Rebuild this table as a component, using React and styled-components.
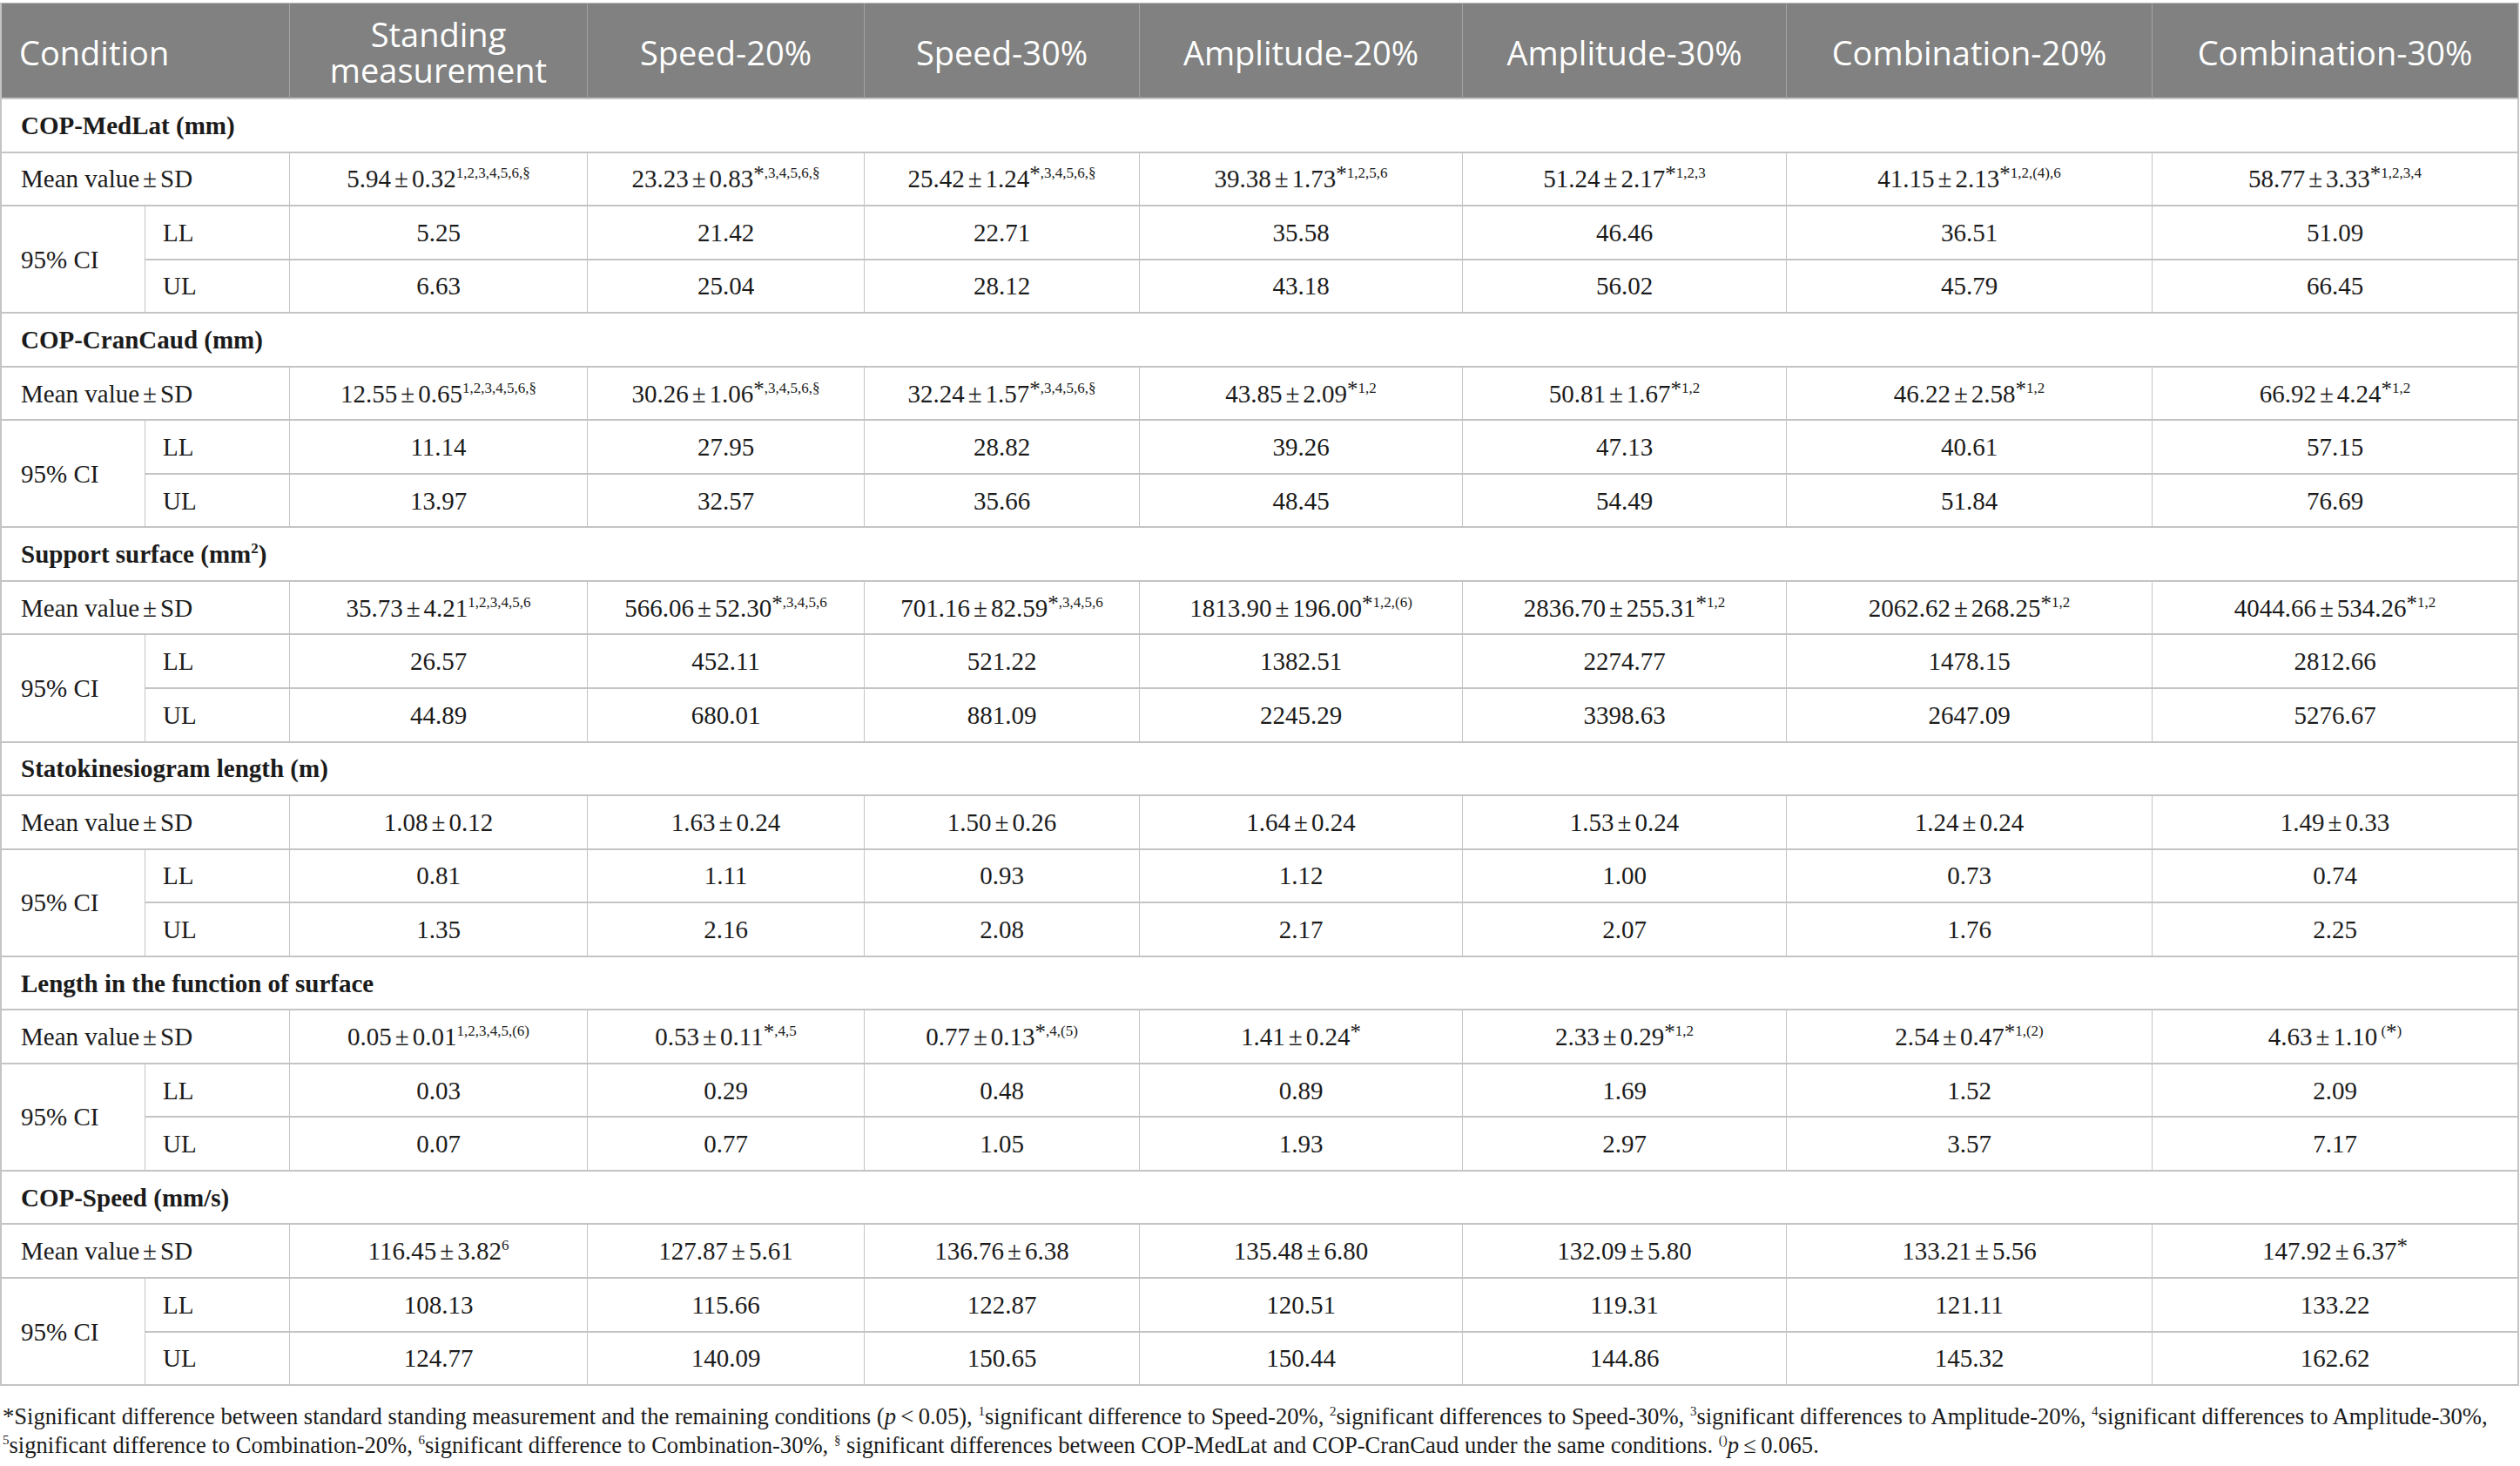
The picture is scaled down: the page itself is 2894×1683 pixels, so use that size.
import React from "react";
import styled, { createGlobalStyle } from "styled-components";

const GlobalStyle = createGlobalStyle`
  html, body {
    margin: 0;
    padding: 0;
    background: #ffffff;
  }
  body {
    font-family: "Liberation Serif", "Times New Roman", serif;
    color: #1b1b1b;
  }
`;

const line = "#c4c4c4";

const Page = styled.div`
  padding: 3px 0 0 0;
  width: 2894px;
`;

const Table = styled.div`
  display: grid;
  grid-template-columns: 165px 166px 342px 318px 316px 371px 372px 420px 420px;
  grid-template-rows: 110px;
  grid-auto-rows: 61.55px;
  width: max-content;
  border-left: 2px solid ${line};
  border-right: 1px solid ${line};
  border-top: 1px solid #bdbdbd;
`;

const HeadCell = styled.div`
  background: #808180;
  color: #ffffff;
  font-family: "Open Sans", "Liberation Sans", sans-serif;
  font-size: 38px;
  line-height: 41px;
  display: flex;
  align-items: center;
  justify-content: ${(p) => (p.$left ? "flex-start" : "center")};
  text-align: ${(p) => (p.$left ? "left" : "center")};
  padding: ${(p) => (p.$left ? "4px 0 0 20px" : "4px 0 0 0")};
  grid-column: span ${(p) => p.$span || 1};
  border-right: 1px solid #a3a3a3;
  border-bottom: 2px solid ${line};
  box-sizing: border-box;
`;

const Cell = styled.div`
  display: flex;
  align-items: center;
  box-sizing: border-box;
  border-right: 1px solid ${line};
  border-bottom: 2px solid ${line};
  font-size: 29px;
  white-space: nowrap;
`;

// inner text run, so superscripts stay inline inside the flex cell
const CellText = styled.span`
  display: block;
  line-height: 34px;
`;

const SectionCell = styled(Cell)`
  grid-column: 1 / -1;
  font-weight: 700;
  padding-left: 22px;
`;

const LabelCell = styled(Cell)`
  grid-column: span ${(p) => p.$span || 1};
  padding-left: ${(p) => (p.$sub ? "20px" : "22px")};
`;

const CiCell = styled(Cell)`
  grid-row: span 2;
  padding-left: 22px;
`;

const ValueCell = styled(Cell)`
  justify-content: center;
`;

const Pm = styled.span`
  margin: 0 4px;
`;

const Sup = styled.sup`
  font-size: 17px;
  line-height: 0;
  vertical-align: 11px;
  white-space: pre;
`;

const Star = styled.span`
  font-size: 25px;
  vertical-align: -4px;
`;

const Note = styled.p`
  margin: 19px 0 0 3px;
  font-size: 26.6px;
  line-height: 33px;
  color: #1b1b1b;
  white-space: nowrap;
`;

const NoteSup = styled.sup`
  font-size: 15px;
  line-height: 0;
  vertical-align: 10px;
`;

const columns = [
  "Speed-20%",
  "Speed-30%",
  "Amplitude-20%",
  "Amplitude-30%",
  "Combination-20%",
  "Combination-30%",
];

const sections = [
  {
    title: "COP-MedLat (mm)",
    mean: [
      ["5.94", "0.32", "1,2,3,4,5,6,§"],
      ["23.23", "0.83", "*,3,4,5,6,§"],
      ["25.42", "1.24", "*,3,4,5,6,§"],
      ["39.38", "1.73", "*1,2,5,6"],
      ["51.24", "2.17", "*1,2,3"],
      ["41.15", "2.13", "*1,2,(4),6"],
      ["58.77", "3.33", "*1,2,3,4"],
    ],
    ll: ["5.25", "21.42", "22.71", "35.58", "46.46", "36.51", "51.09"],
    ul: ["6.63", "25.04", "28.12", "43.18", "56.02", "45.79", "66.45"],
  },
  {
    title: "COP-CranCaud (mm)",
    mean: [
      ["12.55", "0.65", "1,2,3,4,5,6,§"],
      ["30.26", "1.06", "*,3,4,5,6,§"],
      ["32.24", "1.57", "*,3,4,5,6,§"],
      ["43.85", "2.09", "*1,2"],
      ["50.81", "1.67", "*1,2"],
      ["46.22", "2.58", "*1,2"],
      ["66.92", "4.24", "*1,2"],
    ],
    ll: ["11.14", "27.95", "28.82", "39.26", "47.13", "40.61", "57.15"],
    ul: ["13.97", "32.57", "35.66", "48.45", "54.49", "51.84", "76.69"],
  },
  {
    title: (
      <>
        Support surface (mm<Sup>2</Sup>)
      </>
    ),
    mean: [
      ["35.73", "4.21", "1,2,3,4,5,6"],
      ["566.06", "52.30", "*,3,4,5,6"],
      ["701.16", "82.59", "*,3,4,5,6"],
      ["1813.90", "196.00", "*1,2,(6)"],
      ["2836.70", "255.31", "*1,2"],
      ["2062.62", "268.25", "*1,2"],
      ["4044.66", "534.26", "*1,2"],
    ],
    ll: ["26.57", "452.11", "521.22", "1382.51", "2274.77", "1478.15", "2812.66"],
    ul: ["44.89", "680.01", "881.09", "2245.29", "3398.63", "2647.09", "5276.67"],
  },
  {
    title: "Statokinesiogram length (m)",
    mean: [
      ["1.08", "0.12"],
      ["1.63", "0.24"],
      ["1.50", "0.26"],
      ["1.64", "0.24"],
      ["1.53", "0.24"],
      ["1.24", "0.24"],
      ["1.49", "0.33"],
    ],
    ll: ["0.81", "1.11", "0.93", "1.12", "1.00", "0.73", "0.74"],
    ul: ["1.35", "2.16", "2.08", "2.17", "2.07", "1.76", "2.25"],
  },
  {
    title: "Length in the function of surface",
    mean: [
      ["0.05", "0.01", "1,2,3,4,5,(6)"],
      ["0.53", "0.11", "*,4,5"],
      ["0.77", "0.13", "*,4,(5)"],
      ["1.41", "0.24", "*"],
      ["2.33", "0.29", "*1,2"],
      ["2.54", "0.47", "*1,(2)"],
      ["4.63", "1.10", " (*)"],
    ],
    ll: ["0.03", "0.29", "0.48", "0.89", "1.69", "1.52", "2.09"],
    ul: ["0.07", "0.77", "1.05", "1.93", "2.97", "3.57", "7.17"],
  },
  {
    title: "COP-Speed (mm/s)",
    mean: [
      ["116.45", "3.82", "6"],
      ["127.87", "5.61"],
      ["136.76", "6.38"],
      ["135.48", "6.80"],
      ["132.09", "5.80"],
      ["133.21", "5.56"],
      ["147.92", "6.37", "*"],
    ],
    ll: ["108.13", "115.66", "122.87", "120.51", "119.31", "121.11", "133.22"],
    ul: ["124.77", "140.09", "150.65", "150.44", "144.86", "145.32", "162.62"],
  },
];

// splits the superscript so the asterisk can be drawn a bit bigger
function Marks({ text }) {
  if (!text) return null;
  const parts = text.split("*");
  return (
    <Sup>
      {parts.map((part, i) => (
        <React.Fragment key={i}>
          {i > 0 && <Star>*</Star>}
          {part}
        </React.Fragment>
      ))}
    </Sup>
  );
}

function MeanValue({ value, sd, marks }) {
  return (
    <ValueCell>
      <CellText>
        {value}
        <Pm>±</Pm>
        {sd}
        <Marks text={marks} />
      </CellText>
    </ValueCell>
  );
}

function Section({ data }) {
  return (
    <>
      <SectionCell>
        <CellText>{data.title}</CellText>
      </SectionCell>
      <LabelCell $span={2}>
        <CellText>
          Mean value<Pm>±</Pm>SD
        </CellText>
      </LabelCell>
      {data.mean.map(([v, sd, m], i) => (
        <MeanValue key={i} value={v} sd={sd} marks={m} />
      ))}
      <CiCell>
        <CellText>95% CI</CellText>
      </CiCell>
      <LabelCell $sub>
        <CellText>LL</CellText>
      </LabelCell>
      {data.ll.map((v, i) => (
        <ValueCell key={i}>
          <CellText>{v}</CellText>
        </ValueCell>
      ))}
      <LabelCell $sub>
        <CellText>UL</CellText>
      </LabelCell>
      {data.ul.map((v, i) => (
        <ValueCell key={i}>
          <CellText>{v}</CellText>
        </ValueCell>
      ))}
    </>
  );
}

export default function App() {
  return (
    <Page>
      <GlobalStyle />
      <Table>
        <HeadCell $left $span={2}>
          Condition
        </HeadCell>
        <HeadCell>
          Standing
          <br />
          measurement
        </HeadCell>
        {columns.map((c) => (
          <HeadCell key={c}>{c}</HeadCell>
        ))}
        {sections.map((s, i) => (
          <Section key={i} data={s} />
        ))}
      </Table>
      <Note>
        *Significant difference between standard standing measurement and the remaining conditions (<i>p</i>
        {"\u2009<\u2009"}0.05), <NoteSup>1</NoteSup>significant difference to Speed-20%,{" "}
        <NoteSup>2</NoteSup>significant differences to Speed-30%, <NoteSup>3</NoteSup>significant
        differences to Amplitude-20%, <NoteSup>4</NoteSup>significant differences to Amplitude-30%,
        <br />
        <NoteSup>5</NoteSup>significant difference to Combination-20%, <NoteSup>6</NoteSup>significant
        difference to Combination-30%, <NoteSup>§</NoteSup> significant differences between COP-MedLat
        and COP-CranCaud under the same conditions. <NoteSup>()</NoteSup>
        <i>p</i>
        {"\u2009≤\u2009"}0.065.
      </Note>
    </Page>
  );
}
